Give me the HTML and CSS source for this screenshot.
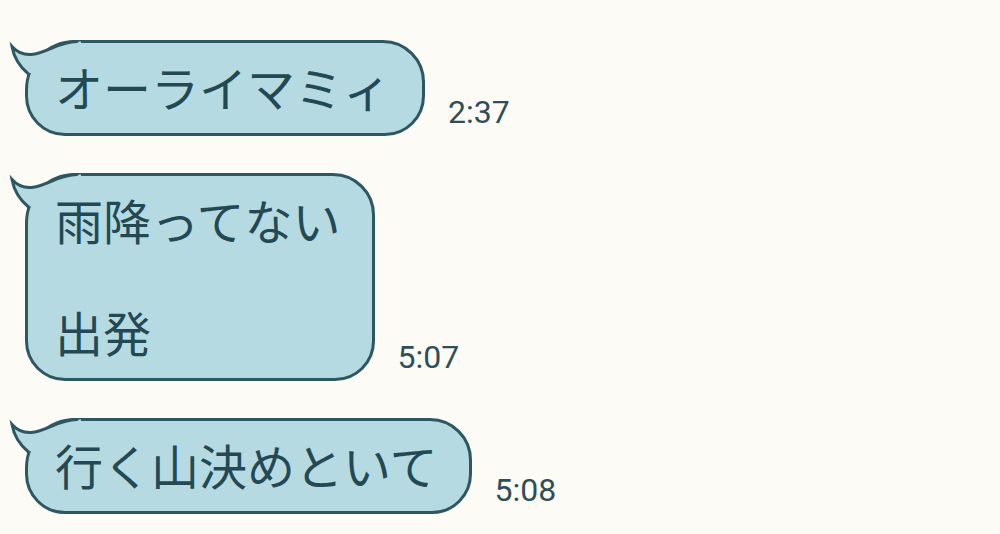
FILE: index.html
```html
<!DOCTYPE html>
<html lang="ja">
<head>
    <meta charset="UTF-8">
    <title>トーク</title>
    <link rel="stylesheet" href="styles.css">
</head>
<body>

    <div class="talk">

        <div class="row">
            <div class="bubble">
                <svg class="tail" viewBox="-20 -3 80 50" width="80" height="50">
                    <path class="tail-fill" d="M52 1.5 C34 1.5, 22 13, 6 14.5 C-3 15, -9 11, -13 6.5 C-11 18, -5 27, 3.5 34 L14 30 L30 14 L56 6 L56 1.5 Z"/>
                    <path class="tail-line" d="M52 1.5 C34 1.5, 22 13, 6 14.5 C-3 15, -9 11, -13 6.5 C-11 18, -5 27, 3.5 34"/>
                </svg>
                オーライマミィ
            </div>
            <span class="time">2:37</span>
        </div>

        <div class="row">
            <div class="bubble">
                <svg class="tail" viewBox="-20 -3 80 50" width="80" height="50">
                    <path class="tail-fill" d="M52 1.5 C34 1.5, 22 13, 6 14.5 C-3 15, -9 11, -13 6.5 C-11 18, -5 27, 3.5 34 L14 30 L30 14 L56 6 L56 1.5 Z"/>
                    <path class="tail-line" d="M52 1.5 C34 1.5, 22 13, 6 14.5 C-3 15, -9 11, -13 6.5 C-11 18, -5 27, 3.5 34"/>
                </svg>
                雨降ってない<br><br>出発
            </div>
            <span class="time">5:07</span>
        </div>

        <div class="row">
            <div class="bubble">
                <svg class="tail" viewBox="-20 -3 80 50" width="80" height="50">
                    <path class="tail-fill" d="M52 1.5 C34 1.5, 22 13, 6 14.5 C-3 15, -9 11, -13 6.5 C-11 18, -5 27, 3.5 34 L14 30 L30 14 L56 6 L56 1.5 Z"/>
                    <path class="tail-line" d="M52 1.5 C34 1.5, 22 13, 6 14.5 C-3 15, -9 11, -13 6.5 C-11 18, -5 27, 3.5 34"/>
                </svg>
                行く山決めといて
            </div>
            <span class="time">5:08</span>
        </div>

    </div>

</body>
</html>
```

FILE: styles.css
```css
*{
    margin: 0;
    padding: 0;
    box-sizing: border-box;
}

body{
    background-color: #fcfbf6;
    width: 1000px;
    height: 534px;
    overflow: hidden;
}

.talk{
    display: flex;
    flex-direction: column;
    align-items: flex-start;
    gap: 37px;
    padding: 40px 0 0 25px;
}

.row{
    display: flex;
    align-items: flex-end;
    gap: 23px;
}

.bubble{
    position: relative;
    background-color: #b6dae2;
    border: 3px solid #2d5761;
    border-radius: 50px 42px 40px 40px;
    padding: 15px 31px 19px 27px;
    font-family: "Noto Sans CJK JP", sans-serif;
    font-size: 48px;
    line-height: 56px;
    color: #234a54;
    white-space: nowrap;
}

.tail{
    position: absolute;
    left: -23px;
    top: -6px;
    overflow: visible;
}

.tail-fill{
    fill: #b6dae2;
}

.tail-line{
    fill: none;
    stroke: #2d5761;
    stroke-width: 3;
    stroke-linecap: round;
}

.time{
    font-family: Roboto, sans-serif;
    font-size: 32px;
    line-height: 38px;
    color: #2f4e56;
    margin-bottom: 5px;
}
```
